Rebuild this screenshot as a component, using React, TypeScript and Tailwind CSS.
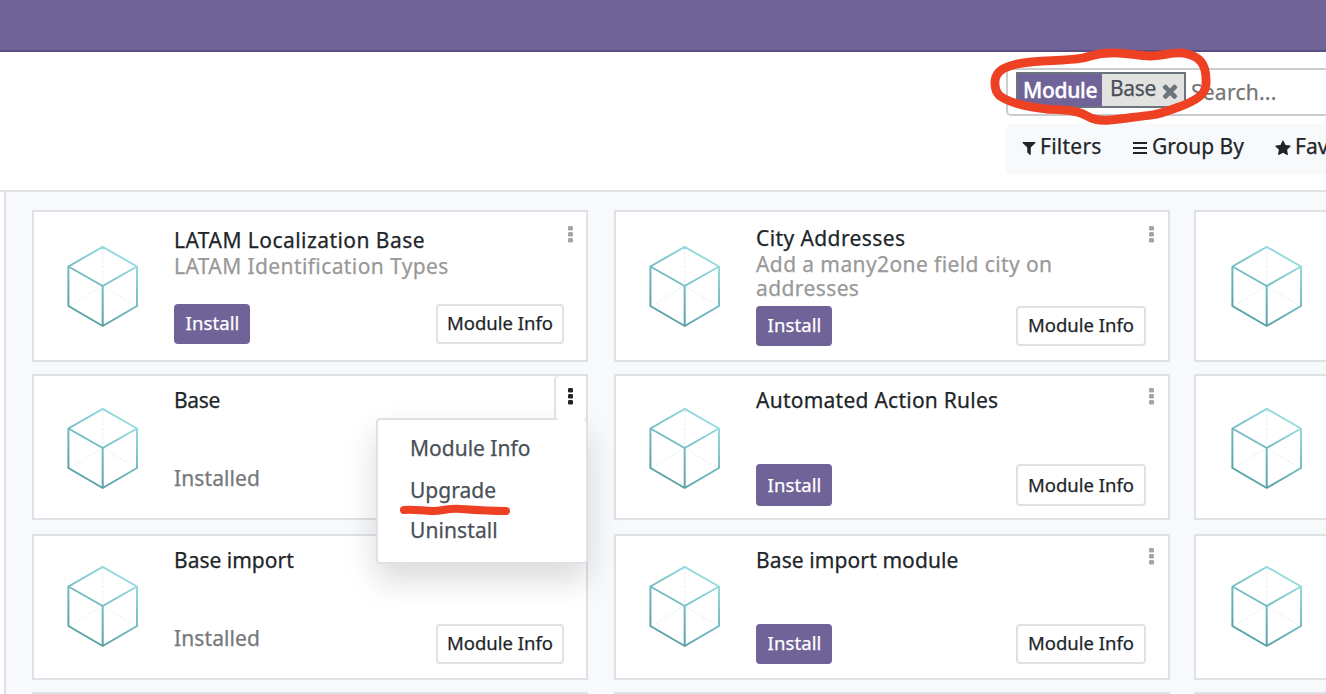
import React from "react";

function Cube() {
  return (
    <svg className="block h-[84px] w-[74px] shrink-0" viewBox="0 0 74 84" fill="none">
      <defs>
        <linearGradient id="cube-line" x1="20" y1="78" x2="60" y2="10" gradientUnits="userSpaceOnUse">
          <stop offset="0" stopColor="#559fa3" />
          <stop offset="0.5" stopColor="#74bcc1" />
          <stop offset="1" stopColor="#9bdfe2" />
        </linearGradient>
      </defs>
      <path d="M36.700 4V42M4 62L36.700 42L70 62" stroke="#d9efee" strokeWidth="0.9" strokeDasharray="2.5 2" />
      <path
        d="M36.700 2.800L71 22.500V62L36.700 82L2.400 62V22.500ZM2.400 22.500L36.700 42L71 22.500M36.700 42V82"
        stroke="url(#cube-line)"
        strokeWidth="2"
        strokeLinejoin="round"
      />
    </svg>
  );
}

function Kebab({ className }: { className: string }) {
  return (
    <svg className={`block h-[17px] w-[5px] shrink-0 ${className}`} viewBox="0 0 5 17" fill="currentColor">
      <rect width="5" height="4.600" rx="1.400" />
      <rect y="6" width="5" height="4.600" rx="1.400" />
      <rect y="12" width="5" height="4.600" rx="1.400" />
    </svg>
  );
}

type CardProps = {
  title?: string;
  summary?: string;
  state?: "install" | "installed";
  info?: string;
  body?: string;
  cube?: string;
  kebab?: string;
  titleTrack?: string;
  footer?: string;
  button?: string;
  children?: React.ReactNode;
};

function Card({
  title,
  summary,
  state,
  info,
  body = "pt-[11px]",
  cube = "pt-[30px] pl-[32px]",
  kebab = "mt-[1px] text-[#a2a5a8]",
  titleTrack = "",
  footer = "pb-[14px]",
  button = "h-10 pb-[2px]",
  children,
}: CardProps) {
  return (
    <article className="relative flex min-w-0 border-2 border-[#dee2e6] bg-white">
      <div className={`flex w-[140px] shrink-0 items-start ${cube}`}>
        <Cube />
      </div>
      {title && (
        <div className={`flex min-w-0 flex-1 flex-col justify-between ${body} ${footer}`}>
          <div className="flex items-start justify-between pr-[14px]">
            <div>
              <h3 className={`text-[21px] leading-[26px] whitespace-nowrap text-[#212529] ${titleTrack}`}>{title}</h3>
              {summary && (
                <p className="mt-px max-w-[310px] text-[21px] leading-6 tracking-[0.4px] text-[#999]">{summary}</p>
              )}
            </div>
            <Kebab className={kebab} />
          </div>
          <div className="flex items-start justify-between pr-[22px]">
            {state === "install" ? (
              <button
                className={`w-[76px] rounded-[4px] bg-[#6f6398] pl-px text-[18.500px] tracking-[0.1px] text-white ${button}`}
              >
                Install
              </button>
            ) : (
              <span className="h-10 text-[21px] leading-7 tracking-[0.1px] text-[#75787c]">Installed</span>
            )}
            {info && (
              <button
                className={`rounded-[4px] border-2 border-[#dee2e6] bg-white text-[18.500px] whitespace-nowrap text-[#212529] ${button} ${info}`}
              >
                Module Info
              </button>
            )}
          </div>
        </div>
      )}
      {children}
    </article>
  );
}

function ActionsMenu() {
  return (
    <>
      <div className="absolute top-[42px] right-[-2px] z-10 flex h-[146px] w-[212px] flex-col rounded-[4px] border-2 border-[#dee2e6] bg-white pt-[7px] pl-8 text-[21px] text-[#495057] shadow-[0_16px_32px_rgba(0,0,0,0.15)]">
        <span className="h-[42px] leading-[42px]">Module Info</span>
        <span className="h-[40px] leading-[42px]">Upgrade</span>
        <span className="h-[42px] leading-[42px] tracking-[0.1px]">Uninstall</span>
        <svg className="absolute top-[84px] left-[21px] h-3 w-[112px]" viewBox="0 0 112 12" fill="none">
          <path d="M5 6C14 5 24 7 34 7S48 4 62 5S94 7 107 7" stroke="#ee4023" strokeWidth="8" strokeLinecap="round" />
        </svg>
      </div>
      <div className="absolute top-0 right-0 z-20 flex h-[44px] w-[30px] justify-center rounded-[4px] bg-white pt-3 pr-px shadow-[-2px_0_0_#dee2e6]">
        <Kebab className="text-[#212529]" />
      </div>
    </>
  );
}

function SearchArea() {
  return (
    <div className="relative ml-[1006px] flex flex-col gap-2 pt-4">
      <div className="flex h-12 items-start rounded-l-[5px] border-2 border-r-0 border-[#ccc] bg-white pt-[2px] pl-2">
        <div className="flex h-9 w-[170px] border-2 border-[#6c757d] bg-[#e2e2e0] text-[21px]">
          <span className="w-[84px] bg-[#6f6398] pl-[5px] font-medium leading-[32px] tracking-[-0.3px] text-white [-webkit-text-stroke:0.4px]">
            Module
          </span>
          <span className="w-[57px] pl-2 leading-[29px] tracking-[-0.3px] text-[#495057]">Base</span>
          <svg className="mt-[6px] size-[22px] shrink-0" viewBox="0 0 1792 1792" fill="#6c757d">
            <path d="M1490 1322q0 40-28 68l-136 136q-28 28-68 28t-68-28l-294-294-294 294q-28 28-68 28t-68-28l-136-136q-28-28-28-68t28-68l294-294-294-294q-28-28-28-68t28-68l136-136q28-28 68-28t68 28l294 294 294-294q28-28 68-28t68 28l136 136q28 28 28 68t-28 68l-294 294 294 294q28 28 28 68z" />
          </svg>
        </div>
        <span className="pl-[5px] text-[21px] leading-[41px] tracking-[0.25px] text-[#757575]">Search...</span>
      </div>
      <div className="flex h-[50px] w-[320px] overflow-hidden rounded-l-[5px] bg-[#f8f9fa] text-[21px] leading-[45px] whitespace-nowrap text-[#212529]">
        <div className="flex w-[110px] shrink-0 pl-4 tracking-[0.25px]">
          <svg className="mt-[18px] mr-[4px] h-[13px] w-[14px]" viewBox="190 256 1412 1408" fill="currentColor">
            <path d="M1595 295q17 41-14 70l-493 493v742q0 42-39 59-13 5-25 5-27 0-45-19l-256-256q-19-19-19-45v-486l-493-493q-31-29-14-70 17-39 59-39h1280q42 0 59 39z" />
          </svg>
          Filters
        </div>
        <div className="flex w-[142px] shrink-0 pl-[17px]">
          <svg className="mt-[18px] mr-[5px] h-3 w-[14px]" viewBox="0 0 14 12" fill="currentColor">
            <rect width="14" height="2" />
            <rect y="5" width="14" height="2" />
            <rect y="10" width="14" height="2" />
          </svg>
          Group By
        </div>
        <div className="flex shrink-0 pl-[17px]">
          <svg className="mt-4 mr-[4px] h-[15px] w-4" viewBox="64 0 1664 1620" fill="currentColor">
            <path d="M1728 647q0 22-26 48l-363 354 86 500q1 7 1 20 0 21-10.500 35.500t-30.500 14.500q-19 0-40-12l-449-236-449 236q-22 12-40 12-21 0-31.500-14.500t-10.500-35.500q0-6 2-20l86-500-364-354q-25-27-25-48 0-37 56-46l502-73 225-455q19-41 49-41t49 41l225 455 502 73q56 9 56 46z" />
          </svg>
          Favorites
        </div>
      </div>
      <svg className="absolute top-[-6px] left-[-20px] z-10 h-[86px] w-[230px]" viewBox="986 46 230 86" fill="none">
        <path
          d="M1000 96C994 91 995 85 995 81C996 71 1004 67 1017 64C1040 59 1060 62 1083 58C1096 55 1098 53 1110 53C1125 52 1137 56 1150 56C1163 56 1170 52 1183 53C1201 56 1206 65 1206 80C1207 92 1201 98 1184 105C1168 111 1161 114 1152 115C1134 117 1123 119 1110 120C1098 121 1092 119 1085 115C1077 110 1064 110 1046 109C1028 107 1010 103 1000 96Z"
          stroke="#ee4023"
          strokeWidth="8.800"
          strokeLinejoin="round"
        />
      </svg>
    </div>
  );
}

export default function App() {
  return (
    <div className="flex h-[694px] w-[1326px] flex-col overflow-hidden bg-white font-['Noto_Sans',sans-serif] [-webkit-text-stroke:0.25px]">
      <header className="h-[52px] shrink-0 border-b-2 border-[#5a4f7f] bg-[#6f6398]" />
      <section className="h-[140px] shrink-0 border-b-2 border-[#dee2e6]">
        <SearchArea />
      </section>
      <main className="ml-1 flex-1 overflow-hidden border-l-2 border-[#dee2e6] bg-[#f8f9fa] pt-[18px] pl-[26px]">
        <div className="flex w-[1718px] gap-6">
          <div className="mr-[2px] grid w-[556px] shrink-0 grid-rows-[152px_146px_146px_146px] content-start gap-y-3">
            <Card
              title="LATAM Localization Base"
              titleTrack="tracking-[0.45px]"
              summary="LATAM Identification Types"
              state="install"
              info="w-[128px]"
              body="pt-[15px]"
              kebab="mt-[-1px] mr-[-1px] text-[#a2a5a8]"
              cube="pt-[32px] pl-[32px]"
              footer="pb-4"
            />
            <Card
              title="Base"
              titleTrack="tracking-[-0.3px]"
              state="installed"
              kebab="invisible"
              footer="pb-[14px]"
            >
              <ActionsMenu />
            </Card>
            <div className="mt-[2px] mb-[-2px] grid">
              <Card
                title="Base import"
                state="installed"
                info="w-[128px]"
                kebab="invisible"
                cube="pt-[28px] pl-[32px]"
              />
            </div>
            <div className="mt-[2px] grid">
              <Card />
            </div>
          </div>
          <div className="grid w-[556px] shrink-0 grid-rows-[152px_146px_146px_146px] content-start gap-y-3">
            <Card
              title="City Addresses"
              titleTrack="tracking-[0.4px]"
              summary="Add a many2one field city on addresses"
              state="install"
              info="w-[130px]"
              body="pt-[13px]"
              kebab="mt-[1px] text-[#a2a5a8]"
              cube="pt-[32px] pl-[32px]"
            />
            <Card
              title="Automated Action Rules"
              titleTrack="tracking-[0.25px]"
              state="install"
              info="w-[130px]"
              footer="pb-3"
              button="h-[42px]"
            />
            <div className="mt-[2px] mb-[-2px] grid">
              <Card
                title="Base import module"
                titleTrack="tracking-[0.1px]"
                state="install"
                info="w-[130px]"
                cube="pt-[28px] pl-[32px]"
              />
            </div>
            <div className="mt-[2px] grid">
              <Card />
            </div>
          </div>
          <div className="grid w-[556px] shrink-0 grid-rows-[152px_146px_146px_146px] content-start gap-y-3">
            <Card cube="pt-[32px] pl-[34px]" />
            <Card cube="pt-[30px] pl-[34px]" />
            <div className="mt-[2px] mb-[-2px] grid">
              <Card cube="pt-[28px] pl-[34px]" />
            </div>
            <div className="mt-[2px] grid">
              <Card />
            </div>
          </div>
        </div>
      </main>
    </div>
  );
}
